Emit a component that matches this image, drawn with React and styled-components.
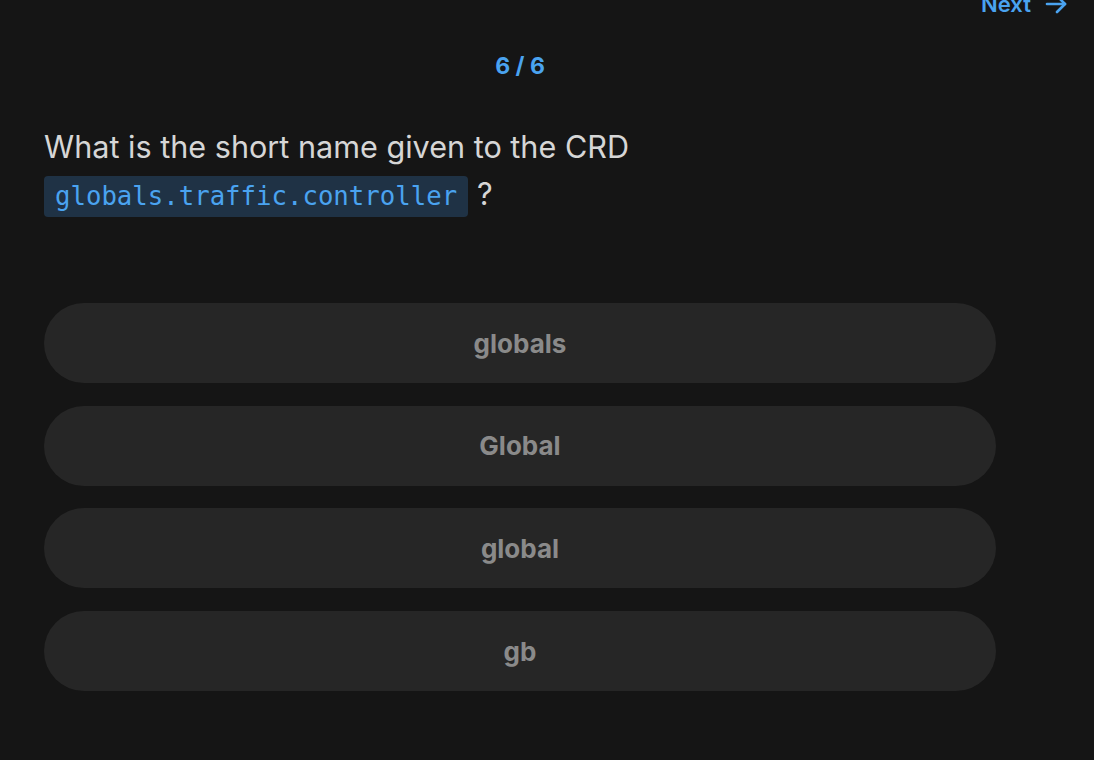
import React from "react";
import styled, { createGlobalStyle } from "styled-components";

const Global = createGlobalStyle`
  html, body { margin: 0; padding: 0; background: #151515; }
  body { font-family: Inter, "Noto Sans", sans-serif; overflow: hidden; }
`;

const Page = styled.div`
  width: 1094px;
  height: 760px;
  background: #151515;
  display: flex;
  flex-direction: column;
`;

const TopBar = styled.div`
  display: flex;
  justify-content: flex-end;
  padding-right: 26px;
  margin-top: -11px;
  height: 30px;
`;

const NextButton = styled.button`
  display: flex;
  align-items: center;
  gap: 13px;
  background: none;
  border: none;
  padding: 0;
  color: #4aa3f0;
  font-family: Inter, sans-serif;
  font-weight: 600;
  font-size: 22px;
  line-height: 30px;
`;

const Content = styled.div`
  width: 952px;
  margin-left: 44px;
  display: flex;
  flex-direction: column;
`;

const Counter = styled.div`
  text-align: center;
  color: #4aa3f0;
  font-weight: 700;
  font-size: 23px;
  line-height: 30px;
  margin-top: 32px;
`;

const Question = styled.div`
  margin-top: 42px;
  color: #d6d6d6;
  font-size: 30.6px;
  line-height: 47px;
  font-weight: 400;
`;

const Code = styled.code`
  display: inline-block;
  background: #1f3245;
  color: #4aa3f0;
  font-family: "DejaVu Sans Mono", monospace;
  font-size: 25.7px;
  line-height: 41px;
  padding: 0 11px;
  border-radius: 4px;
  margin-right: 9px;
  vertical-align: middle;
`;

const Options = styled.div`
  margin-top: 86px;
  display: flex;
  flex-direction: column;
  gap: 22.67px;
`;

const Option = styled.button`
  height: 80px;
  border: none;
  border-radius: 40px;
  background: #262626;
  color: #8a8a8a;
  font-family: Inter, sans-serif;
  font-weight: 700;
  font-size: 26px;
  cursor: pointer;
`;

const options = ["globals", "Global", "global", "gb"];

export default function App() {
  return (
    <Page>
      <Global />
      <TopBar>
        <NextButton>
          Next
          <svg width="24" height="24" viewBox="0 0 24 24" fill="none" stroke="currentColor" strokeWidth="2.6" strokeLinecap="round" strokeLinejoin="round">
            <path d="M3 12h18" />
            <path d="M13 4l8 8-8 8" />
          </svg>
        </NextButton>
      </TopBar>
      <Content>
        <Counter>6 / 6</Counter>
        <Question>
          What is the short name given to the CRD
          <br />
          <Code>globals.traffic.controller</Code>?
        </Question>
        <Options>
          {options.map((o) => (
            <Option key={o}>{o}</Option>
          ))}
        </Options>
      </Content>
    </Page>
  );
}
